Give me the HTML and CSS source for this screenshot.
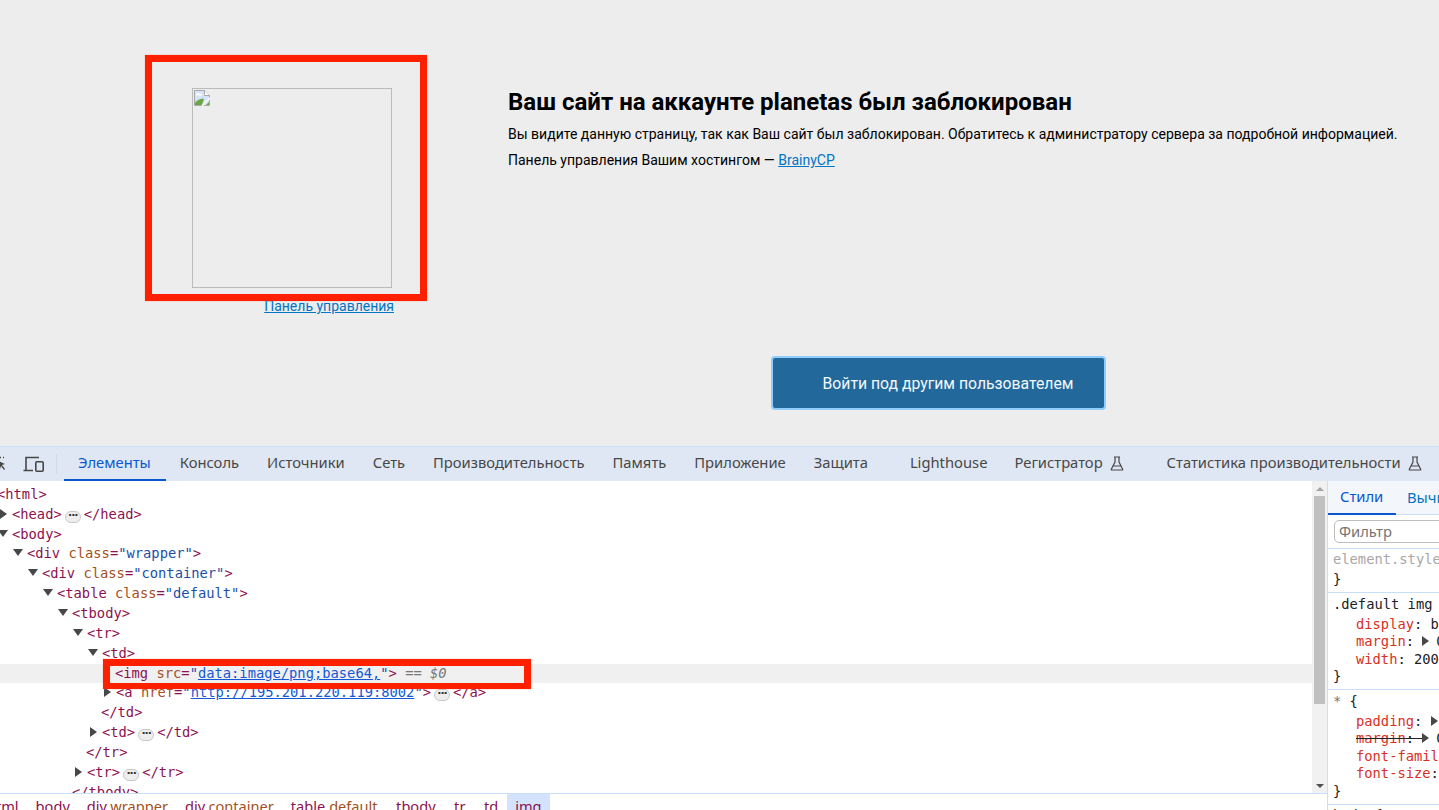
FILE: index.html
```html
<!DOCTYPE html>
<html lang="ru">
<head>
<meta charset="utf-8">
<title>Сайт заблокирован</title>
<link rel="stylesheet" href="styles.css">
</head>
<body>
<div class="page">
  <section class="site">
    <div class="site-row">
      <div class="logo-col">
        <div class="broken-img">
          <svg class="broken-icon" width="16" height="16" viewBox="0 0 16 16"><path d="M.5.5H10.5L15.5 5.5V15.5H.5Z" fill="#d5e3fb" stroke="#a8a8a8"/><path d="M10.5.5V5.5H15.5" fill="#fff" stroke="#a8a8a8"/><path d="M2 4C3 2.5 5 2.5 6 4 7 3.5 8 4.500 8 5.500H2Z" fill="#fff"/><path d="M1 15V13C3 10 7 8 10 9L8 15Z" fill="#6aa843"/><path d="M12 15L15 12V15Z" fill="#6aa843"/><path d="M8 16L16 8" stroke="#f4f4f4" stroke-width="2"/></svg>
        </div>
        <a class="panel-link" href="#">Панель управления</a>
      </div>
      <div class="message">
        <h1>Ваш сайт на аккаунте planetas был заблокирован</h1>
        <p>Вы видите данную страницу, так как Ваш сайт был заблокирован. Обратитесь к администратору сервера за подробной информацией.</p>
        <p>Панель управления Вашим хостингом — <a href="#">BrainyCP</a></p>
      </div>
    </div>
    <div class="site-actions"><button class="login-btn">Войти под другим пользователем</button></div>
    <div class="mark mark-logo"></div>
  </section>

  <section class="devtools">
    <nav class="tabs">
      <svg class="tool-inspect" width="16" height="16" viewBox="0 0 16 16"><path d="M2 2.500h1M5 2.500h1M8 2.500h1M11 2.500h1M2 5.500h1M2 8.500h1" stroke="#474747" stroke-width="1.500" fill="none"/><path d="M6 6l7 3-3 1 3 4-1 1-3-4-1 3z" fill="#474747"/></svg>
      <svg class="tool-device" width="22" height="18" viewBox="0 0 22 18"><path d="M3 15V2.500H16M0.500 15.500H10" stroke="#474747" stroke-width="1.600" fill="none"/><rect x="12.800" y="6.800" width="7.400" height="9.400" rx="1" stroke="#474747" stroke-width="1.600" fill="none"/></svg>
      <span class="tool-sep"></span>
      <a class="tab active">Элементы</a>
      <a class="tab">Консоль</a>
      <a class="tab">Источники</a>
      <a class="tab">Сеть</a>
      <a class="tab">Производительность</a>
      <a class="tab">Память</a>
      <a class="tab">Приложение</a>
      <a class="tab tab-wide">Защита</a>
      <a class="tab tab-lh">Lighthouse</a>
      <a class="tab tab-rec">Регистратор<svg class="flask" width="14" height="15" viewBox="0 0 14 15"><path d="M4 1H10M5 1V6L1.300 13.200Q1 14 2 14H12Q13 14 12.700 13.200L9 6V1M3.500 10H10.500" stroke="#474747" stroke-width="1.200" fill="none"/></svg></a>
      <a class="tab tab-stat">Статистика производительности<svg class="flask" width="14" height="15" viewBox="0 0 14 15"><path d="M4 1H10M5 1V6L1.300 13.200Q1 14 2 14H12Q13 14 12.700 13.200L9 6V1M3.500 10H10.500" stroke="#474747" stroke-width="1.200" fill="none"/></svg></a>
    </nav>
    <div class="panels">
      <div class="elements">
        <div class="tree-wrap">
          <div class="tree">
            <div class="row lm"><span class="t">&lt;html&gt;</span></div>
            <div class="row l0"><i class="tri right"></i><span class="t">&lt;head&gt;</span><b class="dots">···</b><span class="t">&lt;/head&gt;</span></div>
            <div class="row l0"><i class="tri down"></i><span class="t">&lt;body&gt;</span></div>
            <div class="row l1"><i class="tri down"></i><span class="t">&lt;div</span> <span class="a">class</span><span class="t">=</span><span class="v">"wrapper"</span><span class="t">&gt;</span></div>
            <div class="row l2"><i class="tri down"></i><span class="t">&lt;div</span> <span class="a">class</span><span class="t">=</span><span class="v">"container"</span><span class="t">&gt;</span></div>
            <div class="row l3"><i class="tri down"></i><span class="t">&lt;table</span> <span class="a">class</span><span class="t">=</span><span class="v">"default"</span><span class="t">&gt;</span></div>
            <div class="row l4"><i class="tri down"></i><span class="t">&lt;tbody&gt;</span></div>
            <div class="row l5"><i class="tri down"></i><span class="t">&lt;tr&gt;</span></div>
            <div class="row l6"><i class="tri down"></i><span class="t">&lt;td&gt;</span></div>
            <div class="row l7 selected"><span class="t">&lt;img</span> <span class="a">src</span><span class="t">=</span><span class="v">"<u>data:image/png;base64,</u>"</span><span class="t">&gt;</span> <span class="eq">== <em>$0</em></span></div>
            <div class="row l7"><i class="tri right"></i><span class="t">&lt;a</span> <span class="a">href</span><span class="t">=</span><span class="v">"<u>http://195.201.220.119:8002</u>"</span><span class="t">&gt;</span><b class="dots">···</b><span class="t">&lt;/a&gt;</span></div>
            <div class="row l6 close"><span class="t">&lt;/td&gt;</span></div>
            <div class="row l6"><i class="tri right"></i><span class="t">&lt;td&gt;</span><b class="dots">···</b><span class="t">&lt;/td&gt;</span></div>
            <div class="row l5 close"><span class="t">&lt;/tr&gt;</span></div>
            <div class="row l5"><i class="tri right"></i><span class="t">&lt;tr&gt;</span><b class="dots">···</b><span class="t">&lt;/tr&gt;</span></div>
            <div class="row l4"><span class="t">&lt;/tbody&gt;</span></div>
          </div>
          <div class="scrollbar">
            <i class="sb-up"></i>
            <div class="sb-thumb"></div>
            <i class="sb-down"></i>
          </div>
        </div>
        <div class="crumbs">
          <a class="crumb crumb-first"><span class="t">html</span></a>
          <a class="crumb"><span class="t">body</span></a>
          <a class="crumb"><span class="t">div</span><span class="a">.wrapper</span></a>
          <a class="crumb"><span class="t">div</span><span class="a">.container</span></a>
          <a class="crumb"><span class="t">table</span><span class="a">.default</span></a>
          <a class="crumb crumb-loose"><span class="t">tbody</span></a>
          <a class="crumb crumb-loose"><span class="t">tr</span></a>
          <a class="crumb crumb-loose"><span class="t">td</span></a>
          <a class="crumb current"><span class="t">img</span></a>
        </div>
        <div class="mark mark-img"></div>
      </div>
      <aside class="sidebar">
        <div class="side-tabs"><a class="side-tab active">Стили</a><a class="side-tab">Вычисленные</a></div>
        <div class="filter-bar"><div class="filter">Фильтр</div></div>
        <div class="rule rule-element"><div class="ln sel-muted">element.style {</div><div class="ln">}</div></div>
        <div class="rule rule-default">
          <div class="ln head">.default img {</div>
          <div class="ln decl"><span class="p">display</span>: block;</div>
          <div class="ln decl"><span class="p">margin</span>: <i class="tri right inline"></i>0;</div>
          <div class="ln decl"><span class="p">width</span>: 200px;</div>
          <div class="ln">}</div>
        </div>
        <div class="rule rule-star">
          <div class="ln head"><span class="star">*</span> {</div>
          <div class="ln decl"><span class="p">padding</span>: <i class="tri right inline"></i>0;</div>
          <div class="ln decl"><s><span class="p">margin</span>: <i class="tri right inline"></i></s>0;</div>
          <div class="ln decl"><span class="p">font-family</span>: Roboto;</div>
          <div class="ln decl"><span class="p">font-size</span>: 14px;</div>
          <div class="ln">}</div>
        </div>
        <div class="rule"><div class="ln">body {</div></div>
      </aside>
    </div>
  </section>
</div>
</body>
</html>
```

FILE: styles.css
```css
* { box-sizing: border-box; }
html, body { margin: 0; padding: 0; height: 100%; overflow: hidden; }
.page { width: 1439px; height: 810px; overflow: hidden; display: flex; flex-direction: column; font-family: Roboto, sans-serif; }

/* Blocked site */
.site { position: relative; height: 446px; flex: none; background: #ededed; color: #000; font-size: 14px; }
.site-row { display: flex; height: 356px; }
.logo-col { width: 508px; padding: 88px 0 0 192px; flex: none; }
.broken-img { width: 200px; height: 200px; border: 1px solid #bbb; padding: 1px; }
.broken-icon { display: block; }
.panel-link { display: block; width: 202px; margin-top: 10px; text-align: right; line-height: 16px; }
a { color: #0275c4; }
.message { padding-top: 88px; white-space: nowrap; }
.message h1 { margin: 0 0 10px; font-size: 24px; line-height: 28px; font-weight: 700; }
.message p { margin: 0 0 9px; line-height: 17px; font-size: 14.02px; }
.site-actions { padding-left: 771px; }
.login-btn { display: block; width: 335px; height: 54px; padding: 0 0 0 19px; border: 2px solid #8fcdff; border-radius: 4px; background: #22689a; color: #f4f8fb; font: 400 15.75px Roboto, sans-serif; }

/* Annotation marks */
.mark { position: absolute; border: 7px solid #ff2000; box-shadow: 0 0 1px #ff8a7a; pointer-events: none; }
.mark-logo { left: 145px; top: 55px; width: 282px; height: 246px; }
.mark-img { left: 103px; top: 178px; width: 428px; height: 30px; border-width: 7px 7px 6px; }

/* Devtools */
.devtools { flex: 1; min-height: 0; display: flex; flex-direction: column; background: #fff; color: #202124; }
.tabs { height: 35px; flex: none; display: flex; align-items: stretch; background: #dfe7f5; border-top: 1px solid #c9def9; font: 14.75px "Noto Sans", sans-serif; color: #474747; white-space: nowrap; }
.tool-inspect { flex: none; margin: 8px 0 0 -8px; }
.tool-device { flex: none; margin: 8px 0 0 15px; }
.tool-sep { flex: none; width: 1px; height: 20px; margin: 7px 7px 0 11px; background: #cfd9ea; }
.tab { display: flex; align-items: center; padding: 0 14px 4px; color: #474747; }
.tab.active { color: #0b57d0; border-bottom: 2px solid #0b57d0; padding: 0 15px 2px 14px; }
.tab-wide { padding-right: 28px; }
.tab-rec { padding-left: 13px; padding-right: 29px; }
.flask { margin-left: 7px; margin-top: 2px; }
.panels { flex: 1; min-height: 0; display: flex; }
.elements { position: relative; width: 1327px; flex: none; display: flex; flex-direction: column; }
.tree-wrap { flex: 1; min-height: 0; display: flex; }
.tree { flex: 1; min-width: 0; overflow: hidden; padding-top: 3.9px; font: 13.77px/19.87px "DejaVu Sans Mono", monospace; white-space: nowrap; }
.row { height: 19.87px; color: #881280; }
.row.selected { background: #f0f0f0; padding-left: 115px; }
.lm { padding-left: 0; text-indent: -3px; }
.l0 { padding-left: 12px; }
.l1 { padding-left: 27px; }
.l2 { padding-left: 42px; }
.l3 { padding-left: 57px; }
.l4 { padding-left: 72px; }
.l5 { padding-left: 87px; }
.l6 { padding-left: 102px; }
.l7 { padding-left: 116px; }
.row.close { text-indent: -1px; }
.t { color: #8c1150; }
.a { color: #a3501c; }
.v { color: #1a4ea8; }
.v u { color: #1558d6; }
.eq { color: #777; }
.eq em { font-style: italic; }
.tri { display: inline-block; width: 0; height: 0; margin-left: -13px; margin-right: 4px; vertical-align: 2px; }
.tri.down { border-left: 5px solid transparent; border-right: 5px solid transparent; border-top: 7px solid #474747; width: 10px; margin-left: -14px; }
.tri.right { border-top: 5px solid transparent; border-bottom: 5px solid transparent; border-left: 7px solid #474747; margin-left: -12px; margin-right: 5px; vertical-align: 0; }
.tri.inline { margin-left: 0; margin-right: 7px; }
.dots { display: inline-block; width: 16px; height: 12px; margin: 0 3px; border: 1px solid #c8c8c8; border-radius: 6px; background: #eee; color: #333; font: 700 11px/8px "DejaVu Sans", sans-serif; text-align: center; vertical-align: 0; letter-spacing: -1px; }
.scrollbar { width: 15px; flex: none; display: flex; flex-direction: column; align-items: center; background: #f1f1f1; }
.sb-up { width: 0; height: 0; margin-top: 6px; border-left: 4px solid transparent; border-right: 4px solid transparent; border-bottom: 4px solid #a3a3a3; }
.sb-thumb { width: 11px; height: 208px; margin-top: 5px; background: #c0c0c0; }
.sb-down { width: 0; height: 0; margin-top: auto; margin-bottom: 5px; border-left: 4px solid transparent; border-right: 4px solid transparent; border-top: 4px solid #505050; }
.crumbs { height: 17px; flex: none; display: flex; overflow: hidden; border-top: 1px solid #c9def9; font: 14.6px/25px "Noto Sans", sans-serif; white-space: nowrap; }
.crumb { padding: 0 8.5px; flex: none; }
.crumb-first { margin-left: -21.6px; }
.crumb-loose { padding-left: 10px; }
.crumb.current { background: #d3e3fd; }

/* Styles sidebar */
.sidebar { flex: 1; min-width: 0; overflow: hidden; border-left: 1px solid #c9def9; font: 13.77px/17.5px "DejaVu Sans Mono", monospace; white-space: nowrap; }
.side-tabs { height: 34px; display: flex; border-bottom: 1px solid #c9def9; font: 14.75px "Noto Sans", sans-serif; background: #f3f6fb; color: #474747; }
.side-tab { display: flex; align-items: center; padding: 0 11px 2px; flex: none; }
.side-tab.active { color: #0b57d0; width: 68px; padding-left: 12px; border-bottom: 2px solid #0b57d0; margin-bottom: -1px; }
.filter-bar { height: 34px; padding: 5px 0 0 6px; border-bottom: 1px solid #c9def9; }
.filter { width: 140px; height: 23px; padding-left: 4px; border: 1px solid #bdbdbd; border-radius: 5px; font: 14.75px/21px "Noto Sans", sans-serif; color: #757575; }
.rule { padding: 2px 0 3px 5px; border-bottom: 1px solid #c9def9; }
.rule-element { height: 44px; padding-top: 0; }
.rule-element .ln { line-height: 20px; }
.rule-default { height: 97px; padding-top: 3px; }
.rule-star { height: 115px; padding-top: 3px; }
.ln { color: #202124; }
.head { margin-bottom: 2px; }
.sel-muted { color: #a8a8a8; }
.decl { padding-left: 23px; }
.p { color: #d93025; }
.star { color: #777; }
s { text-decoration-color: #202124; }
```
